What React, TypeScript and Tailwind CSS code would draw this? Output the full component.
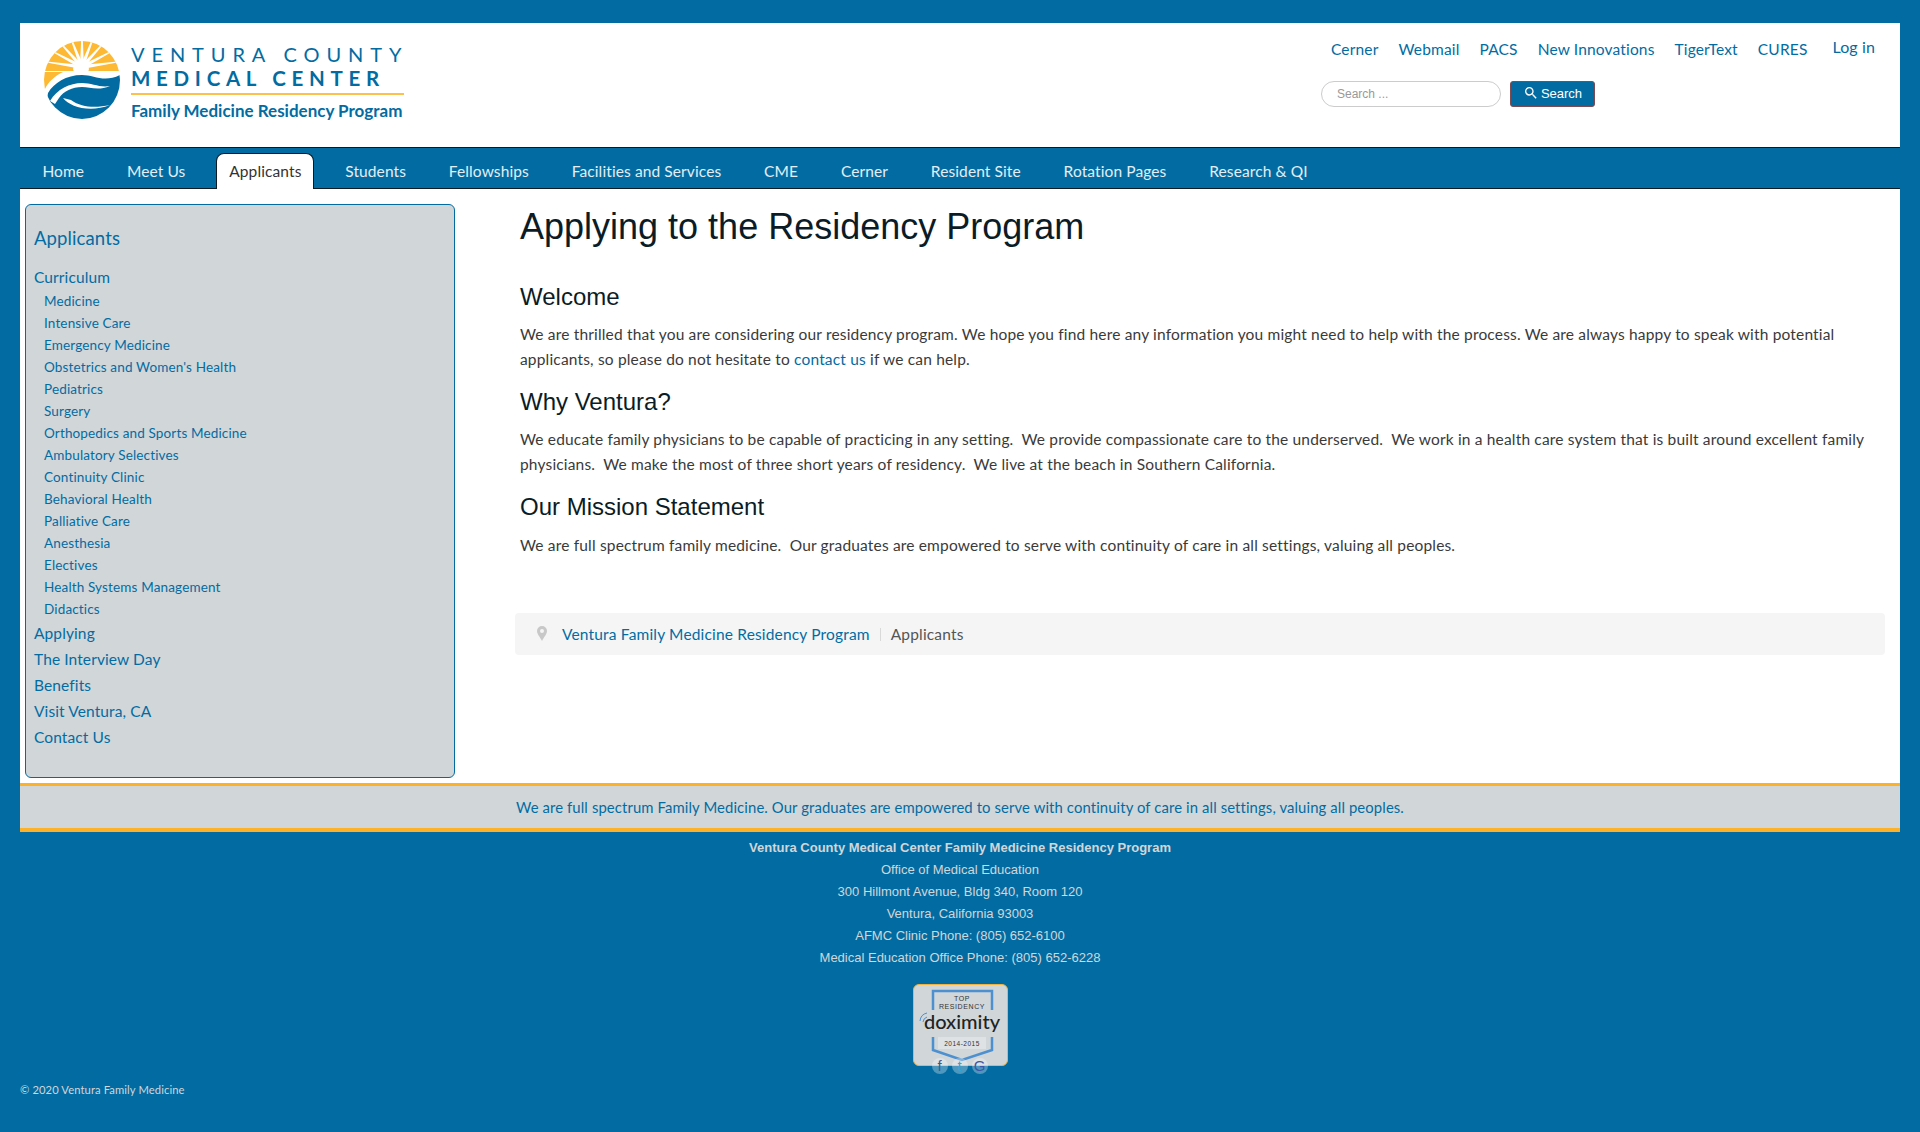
const TOP_LINKS = ["Cerner", "Webmail", "PACS", "New Innovations", "TigerText", "CURES"];

const TABS = [
  "Home",
  "Meet Us",
  "Applicants",
  "Students",
  "Fellowships",
  "Facilities and Services",
  "CME",
  "Cerner",
  "Resident Site",
  "Rotation Pages",
  "Research & QI",
];

const CURRICULUM = [
  "Medicine",
  "Intensive Care",
  "Emergency Medicine",
  "Obstetrics and Women's Health",
  "Pediatrics",
  "Surgery",
  "Orthopedics and Sports Medicine",
  "Ambulatory Selectives",
  "Continuity Clinic",
  "Behavioral Health",
  "Palliative Care",
  "Anesthesia",
  "Electives",
  "Health Systems Management",
  "Didactics",
];

const SIDE_LINKS = ["Applying", "The Interview Day", "Benefits", "Visit Ventura, CA", "Contact Us"];

const ADDRESS = [
  "Office of Medical Education",
  "300 Hillmont Avenue, Bldg 340, Room 120",
  "Ventura, California 93003",
  "AFMC Clinic Phone: (805) 652-6100",
  "Medical Education Office Phone: (805) 652-6228",
];

const RAY_ANGLES = [-82, -62, -42, -21, 0, 21, 42, 62, 82];

function Emblem() {
  return (
    <svg width="76" height="78" viewBox="0 0 76 78" className="shrink-0">
      <defs>
        <clipPath id="disc">
          <ellipse cx="38" cy="39" rx="38" ry="39" />
        </clipPath>
      </defs>
      <g clipPath="url(#disc)">
        <rect width="76" height="78" fill="#ffffff" />
        <rect width="76" height="30" fill="#fdb933" />
        <path d="M0 31 L19 31 C11 35 4 41 1 48 L0 48 Z" fill="#fdb933" />
        {RAY_ANGLES.map((a) => (
          <polygon key={a} points="36,26 40,26 38.3,-14 37.7,-14" fill="#ffffff" transform={`rotate(${a} 38 26)`} />
        ))}
        <ellipse cx="37" cy="28" rx="8" ry="5" fill="#ffffff" />
        <path d="M4 52 C10 42 22 34 38 34 C50 34 60 42 76 34 L76 78 L0 78 Z" fill="#026ca2" />
        <path d="M6 60 C13 48 26 42 38 42 C48 42 56 47 66 45 C54 50 46 46 38 46 C28 46 20 50 15 57 L11 63 Z" fill="#ffffff" />
        <path d="M19 57 C26 66 46 72 66 64 C52 67 38 67 27 59 Z" fill="#ffffff" />
      </g>
    </svg>
  );
}

function Logo() {
  return (
    <div className="flex items-start pl-6 pt-[18px] tracking-normal">
      <Emblem />
      <div className="ml-[11px] flex w-[273px] flex-col font-[Lato,sans-serif] text-[#026ca2]">
        <div className="mt-[1px] h-[24px] text-[20px] leading-[24px] tracking-[6.9px] whitespace-nowrap">VENTURA COUNTY</div>
        <div className="h-[24px] text-[20.5px] leading-[24px] font-bold tracking-[5.7px] whitespace-nowrap">MEDICAL CENTER</div>
        <div className="mt-[3px] h-[2px] bg-[#fdc04d]" />
        <div className="mt-[5px] text-[17px] leading-[22px] font-bold whitespace-nowrap">Family Medicine Residency Program</div>
      </div>
    </div>
  );
}

function TopRight() {
  return (
    <div className="mr-[25px] flex w-[554px] flex-col pt-[14px]">
      <div className="flex justify-end">
        <div className="flex items-start">
          <div className="mt-[2px] flex gap-[20px] text-[15.5px] leading-5 tracking-[0.16px] text-[#026ca2]">
            {TOP_LINKS.map((l) => (
              <a key={l} href="#" className="whitespace-nowrap">
                {l}
              </a>
            ))}
          </div>
          <a href="#" className="ml-[25px] text-[16px] leading-5 whitespace-nowrap text-[#026ca2]">
            Log in
          </a>
        </div>
      </div>
      <div className="mt-[22px] flex items-center gap-[9px] font-['Liberation_Sans',Arial,sans-serif] text-[12px] tracking-normal">
        <div className="flex h-[26px] w-[180px] items-center rounded-full border border-[#cccccc] bg-white pl-[15px] text-[#999999]">
          Search ...
        </div>
        <button className="flex h-[26px] w-[85px] items-center justify-center gap-[2px] rounded-[3px] border border-[#7d4b52] bg-[#026ca2] text-[13px] text-white">
          <svg width="16" height="16" viewBox="0 0 24 24" fill="#ffffff" className="-mt-[3px]">
            <path d="M15.5 14h-.79l-.28-.27A6.47 6.47 0 0 0 16 9.5 6.5 6.5 0 1 0 9.5 16c1.61 0 3.09-.59 4.23-1.57l.27.28v.79l5 4.99L20.49 19l-4.99-5zm-6 0C7.01 14 5 11.99 5 9.5S7.01 5 9.5 5 14 7.01 14 9.5 11.99 14 9.5 14z" />
          </svg>
          Search
        </button>
      </div>
    </div>
  );
}

function TabBar() {
  return (
    <nav className="flex h-[42px] items-end border-y border-[#0b1c26] bg-[#026ca2] pl-[1px] text-[15.5px]">
      {TABS.map((t) =>
        t === "Applicants" ? (
          <a
            key={t}
            href="#"
            className="mx-[9.4px] -mb-px flex h-[36px] items-center rounded-t-lg border border-b-0 border-[#0b1c26] bg-white px-3 text-[#333333]"
          >
            {t}
          </a>
        ) : (
          <a key={t} href="#" className="mx-[9.4px] flex h-[33px] items-center px-3 whitespace-nowrap text-[#e4eef4]">
            {t}
          </a>
        ),
      )}
    </nav>
  );
}

function Sidebar() {
  return (
    <aside className="mt-[15px] ml-[5px] h-[574px] w-[430px] shrink-0 rounded-md border border-[#026ca2] bg-[#d1d6d9] pt-[21px] pl-[8px] text-[#026ca2]">
      <h3 className="text-[18.5px] leading-[24px]">Applicants</h3>
      <a href="#" className="mt-[15px] block text-[15.5px] leading-[24px]">
        Curriculum
      </a>
      <ul className="mt-[1px] pl-[10px] text-[13.5px] leading-[22px] tracking-[0.15px]">
        {CURRICULUM.map((c) => (
          <li key={c}>
            <a href="#">{c}</a>
          </li>
        ))}
      </ul>
      <ul className="text-[15.5px] leading-[26px]">
        {SIDE_LINKS.map((s) => (
          <li key={s}>
            <a href="#">{s}</a>
          </li>
        ))}
      </ul>
    </aside>
  );
}

function Content() {
  return (
    <main className="ml-[65px] flex-1 pt-[18px] pr-[15px] text-[15.5px] leading-[25px] tracking-[0.17px] text-[#3a3a3a]">
      <h1 className="font-['Liberation_Sans',Arial,sans-serif] text-[36px] leading-[40px] tracking-normal text-[#0b1c26]">
        Applying to the Residency Program
      </h1>
      <h2 className="mt-[35px] font-['Liberation_Sans',Arial,sans-serif] text-[24px] leading-[30px] tracking-normal text-[#0b1c26]">Welcome</h2>
      <p className="mt-[10px]">
        We are thrilled that you are considering our residency program. We hope you find here any information you might need to help with the process. We are always happy to speak with potential applicants, so please do not hesitate to{" "}
        <a href="#" className="text-[#026ca2]">
          contact us
        </a>{" "}
        if we can help.
      </p>
      <h2 className="mt-[15px] font-['Liberation_Sans',Arial,sans-serif] text-[24px] leading-[30px] tracking-normal text-[#0b1c26]">Why Ventura?</h2>
      <p className="mt-[10px]">
        We educate family physicians to be capable of practicing in any setting.&nbsp; We provide compassionate care to the underserved.&nbsp; We work in a health care system that is built around excellent family physicians.&nbsp; We make the most of three short years of residency.&nbsp; We live at the beach in Southern California.
      </p>
      <h2 className="mt-[15px] font-['Liberation_Sans',Arial,sans-serif] text-[24px] leading-[30px] tracking-normal text-[#0b1c26]">Our Mission Statement</h2>
      <p className="mt-[11px]">
        We are full spectrum family medicine.&nbsp; Our graduates are empowered to serve with continuity of care in all settings, valuing all peoples.
      </p>
      <div className="mt-[55px] -ml-[5px] flex h-[42px] items-center rounded-[4px] bg-[#f5f5f5] pl-[22px]">
        <svg width="10" height="15" viewBox="0 0 10 15" className="-mt-[2px]">
          <path d="M5 0a5 5 0 0 0-5 5c0 3 3 6 5 10 2-4 5-7 5-10a5 5 0 0 0-5-5zm0 7a2 2 0 1 1 0-4 2 2 0 0 1 0 4z" fill="#c8c8c8" />
        </svg>
        <a href="#" className="ml-[15px] text-[#026ca2]">
          Ventura Family Medicine Residency Program
        </a>
        <span className="mx-[10px] h-[13px] w-px bg-[#d9d9d9]" />
        <span className="text-[#555555]">Applicants</span>
      </div>
    </main>
  );
}

function Badge() {
  return (
    <div className="relative mx-auto mt-[15px] h-[82px] w-[95px] rounded-md border border-[#f3b23f] bg-[#d1d6d9] tracking-normal">
      <svg width="93" height="80" viewBox="0 0 93 80" className="block">
        <path d="M19 25 V6 H78 V25" fill="none" stroke="#4d90cf" strokeWidth="2.5" />
        <path d="M19 52 V65 L48 75 L78 65 V52" fill="none" stroke="#4d90cf" strokeWidth="2.5" />
        <text x="48" y="16" textAnchor="middle" fontSize="7" letterSpacing="0.6" fontFamily="Liberation Sans, sans-serif" fill="#333333">TOP</text>
        <text x="48" y="24" textAnchor="middle" fontSize="7" letterSpacing="0.6" fontFamily="Liberation Sans, sans-serif" fill="#333333">RESIDENCY</text>
        <rect x="10" y="28" width="76" height="22" fill="#d1d6d9" />
        <text x="48" y="44" textAnchor="middle" fontSize="20" fontWeight="500" fontFamily="Lato, sans-serif" fill="#222222">doximity</text>
        <path d="M6 36 A9 9 0 0 1 13 28 M9 37 A6 6 0 0 1 13 32" fill="none" stroke="#4d90cf" strokeWidth="1" />
        <rect x="24" y="52" width="48" height="12" fill="#dfe2e4" />
        <text x="48" y="61" textAnchor="middle" fontSize="6.5" letterSpacing="0.5" fontFamily="Liberation Sans, sans-serif" fill="#333333">2014-2015</text>
      </svg>
      <div className="absolute top-[73px] left-[18px] flex gap-[4px] font-['Liberation_Sans',Arial,sans-serif] text-[15px] leading-4">
        <span className="flex h-4 w-4 items-center justify-center rounded-full bg-white/30 text-[#3b5998]">f</span>
        <span className="flex h-4 w-4 items-center justify-center rounded-full bg-white/30 text-[#2fa8d8]">t</span>
        <span className="flex h-4 w-4 items-center justify-center rounded-full bg-white/30 text-[#3d56a8]">G</span>
      </div>
    </div>
  );
}

export default function App() {
  return (
    <div className="min-h-[1132px] bg-[#026ca2] px-5 pt-[23px] font-[Lato,sans-serif] tracking-[0.11px]">
      <header className="flex h-[124px] justify-between bg-white">
        <Logo />
        <TopRight />
      </header>
      <TabBar />
      <div className="flex h-[594px] bg-white">
        <Sidebar />
        <Content />
      </div>
      <div className="flex h-[49px] items-center justify-center border-t-[3px] border-b-4 border-t-[#fdb128] border-b-[#fdb128] bg-[#d1d6d9] text-[14.85px] text-[#026ca2]">
        We are full spectrum Family Medicine. Our graduates are empowered to serve with continuity of care in all settings, valuing all peoples.
      </div>
      <footer className="pt-[5px] text-center font-['Liberation_Sans',Arial,sans-serif] text-[13px] leading-[22px] tracking-normal text-[#d1d6d9]">
        <div className="font-bold">Ventura County Medical Center Family Medicine Residency Program</div>
        {ADDRESS.map((a) => (
          <div key={a}>{a}</div>
        ))}
        <Badge />
        <div className="mt-[16px] text-left font-[Lato,sans-serif] text-[11.2px] leading-4 tracking-[0.11px] text-[#d1d6d9]">© 2020 Ventura Family Medicine</div>
      </footer>
    </div>
  );
}
